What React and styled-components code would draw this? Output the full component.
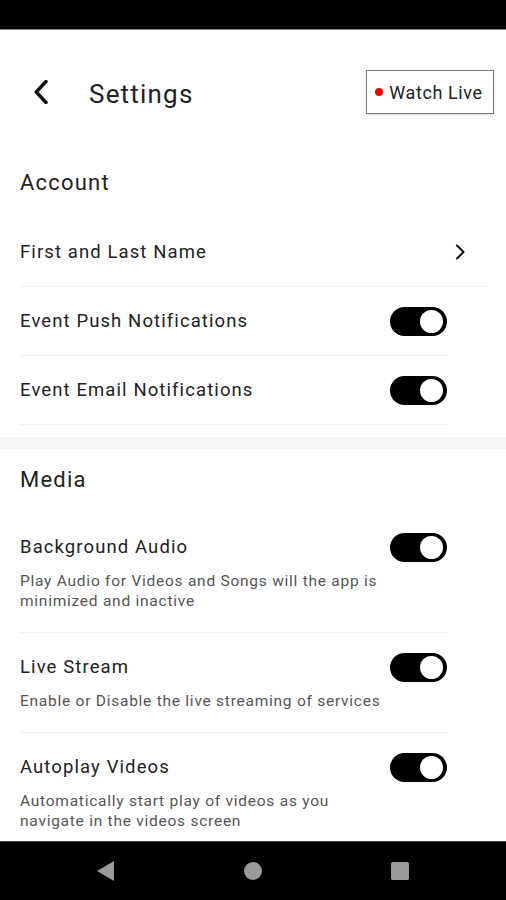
import * as React from "react"
import styled, { createGlobalStyle } from 'styled-components';

const GlobalStyle = createGlobalStyle`
  html, body {
    margin: 0;
    padding: 0;
    background: #fff;
  }
  body {
    font-family: Roboto, "Noto Sans", "Liberation Sans", sans-serif;
    color: #222;
  }
`;

const Screen = styled.div`
  width: 506px;
  height: 900px;
  display: flex;
  flex-direction: column;
  overflow: hidden;
`;

const StatusBar = styled.div`
  height: 29px;
  flex: none;
  background: #000;
  border-bottom: 1px solid #8a8a8a;
`;

const Content = styled.main`
  flex: 1;
  overflow: hidden;
`;

const Header = styled.header`
  height: 124px;
  display: flex;
  align-items: center;
  padding: 0 12px 0 28px;
`;

const BackButton = styled.button`
  width: 26px;
  height: 30px;
  padding: 0;
  border: 0;
  background: none;
  display: flex;
  align-items: center;
  justify-content: center;
  margin-right: 35px;
`;

const Title = styled.h1`
  flex: 1;
  margin: 0 0 -4px;
  font-size: 26px;
  font-weight: 400;
  color: #222;
  letter-spacing: 1.2px;
`;

const LiveButton = styled.button`
  width: 128px;
  height: 44px;
  box-sizing: border-box;
  display: flex;
  align-items: center;
  justify-content: center;
  gap: 6px;
  border: 1.5px solid #7a7a7a;
  background: #fff;
  box-shadow: 0 1px 2px rgba(0, 0, 0, 0.15);
  font-family: inherit;
  font-size: 18px;
  letter-spacing: 0.6px;
  color: #222;
  padding: 0 4px 0 2px;
`;

const LiveDot = styled.span`
  width: 8px;
  height: 8px;
  border-radius: 50%;
  background: #f00000;
`;

const SectionTitle = styled.h2`
  margin: 0;
  padding: ${p => p.$top}px 20px ${p => p.$bottom}px;
  font-size: 22px;
  line-height: 26px;
  font-weight: 400;
  letter-spacing: 1.2px;
  color: #222;
`;

const Section = styled.section`
  padding-bottom: 12px;
`;

const Band = styled.div`
  height: 12px;
  background: #f5f7f7;
`;

const Row = styled.div`
  display: flex;
  align-items: ${p => (p.$top ? 'flex-start' : 'center')};
  min-height: ${p => (p.$top ? 0 : 68)}px;
  margin: 0 ${p => p.$right}px 0 20px;
  padding: ${p => (p.$top ? '20px 0 21px' : '0')};
  padding-right: ${p => p.$padRight || 0}px;
  border-bottom: 1px solid #f0f1f1;
`;

const RowText = styled.div`
  flex: 1;
  min-width: 0;
`;

const Label = styled.div`
  font-size: 18.5px;
  line-height: 28px;
  letter-spacing: 1.1px;
  color: #222;
`;

const Description = styled.div`
  margin-top: 10px;
  font-size: 15.5px;
  line-height: 20px;
  letter-spacing: 0.75px;
  color: #555;
`;

const SwitchTrack = styled.div`
  flex: none;
  width: 57px;
  height: 29px;
  border-radius: 15px;
  background: ${p => (p.$on ? '#000' : '#bbb')};
  display: flex;
  align-items: center;
  justify-content: ${p => (p.$on ? 'flex-end' : 'flex-start')};
  padding: 0 4px;
  box-sizing: border-box;
`;

const SwitchKnob = styled.span`
  width: 23px;
  height: 23px;
  border-radius: 50%;
  background: #fff;
`;

const NavBar = styled.nav`
  height: 58px;
  flex: none;
  background: #000;
  border-top: 1px solid #444;
  display: flex;
  align-items: center;
  justify-content: center;
  gap: 127px;
  padding-right: 1px;
`;

const Chevron = ({ dir = 'right', size = 16, stroke = 2 }) => (
  <svg width={size} height={size * 1.6} viewBox="0 0 10 16" fill="none">
    <path
      d={dir === 'right' ? 'M2 1.5 L8.5 8 L2 14.5' : 'M8 1 L1.5 8 L8 15'}
      stroke="#111"
      strokeWidth={stroke}
      strokeLinecap="round"
      strokeLinejoin="round"
    />
  </svg>
);

const Switch = ({ on = true }) => (
  <SwitchTrack $on={on}>
    <SwitchKnob />
  </SwitchTrack>
);

const ToggleRow = ({ label, description }) => (
  <Row $right={59} $top={!!description}>
    <RowText>
      <Label>{label}</Label>
      {description && <Description>{description}</Description>}
    </RowText>
    <Switch on />
  </Row>
);

const accountToggles = ['Event Push Notifications', 'Event Email Notifications'];

const mediaToggles = [
  { label: 'Background Audio', description: 'Play Audio for Videos and Songs will the app is minimized and inactive' },
  { label: 'Live Stream', description: 'Enable or Disable the live streaming of services' },
  { label: 'Autoplay Videos', description: 'Automatically start play of videos as you navigate in the videos screen' },
];

const App = () => {
  return (
    <Screen>
      <GlobalStyle />
      <StatusBar />
      <Content>
        <Header>
          <BackButton aria-label="Back">
            <Chevron dir="left" size={15} stroke={2.3} />
          </BackButton>
          <Title>Settings</Title>
          <LiveButton>
            <LiveDot />
            Watch Live
          </LiveButton>
        </Header>

        <Section>
          <SectionTitle $top={16} $bottom={22}>Account</SectionTitle>
          <Row $right={19} $padRight={22}>
            <RowText>
              <Label>First and Last Name</Label>
            </RowText>
            <Chevron size={10} stroke={2} />
          </Row>
          {accountToggles.map(d => <ToggleRow key={d} label={d} />)}
        </Section>
        <Band />

        <Section>
          <SectionTitle $top={18} $bottom={20}>Media</SectionTitle>
          {mediaToggles.map(d => <ToggleRow key={d.label} {...d} />)}
        </Section>
      </Content>
      <NavBar>
        <svg width="20" height="22" viewBox="0 0 20 22">
          <path d="M18 1 L18 21 L1 11 Z" fill="#9a9a9a" />
        </svg>
        <svg width="20" height="20" viewBox="0 0 20 20">
          <circle cx="10" cy="10" r="9" fill="#9a9a9a" />
        </svg>
        <svg width="20" height="20" viewBox="0 0 20 20">
          <rect x="1" y="1" width="18" height="18" rx="2" fill="#9a9a9a" />
        </svg>
      </NavBar>
    </Screen>
  );
};

export default App;
